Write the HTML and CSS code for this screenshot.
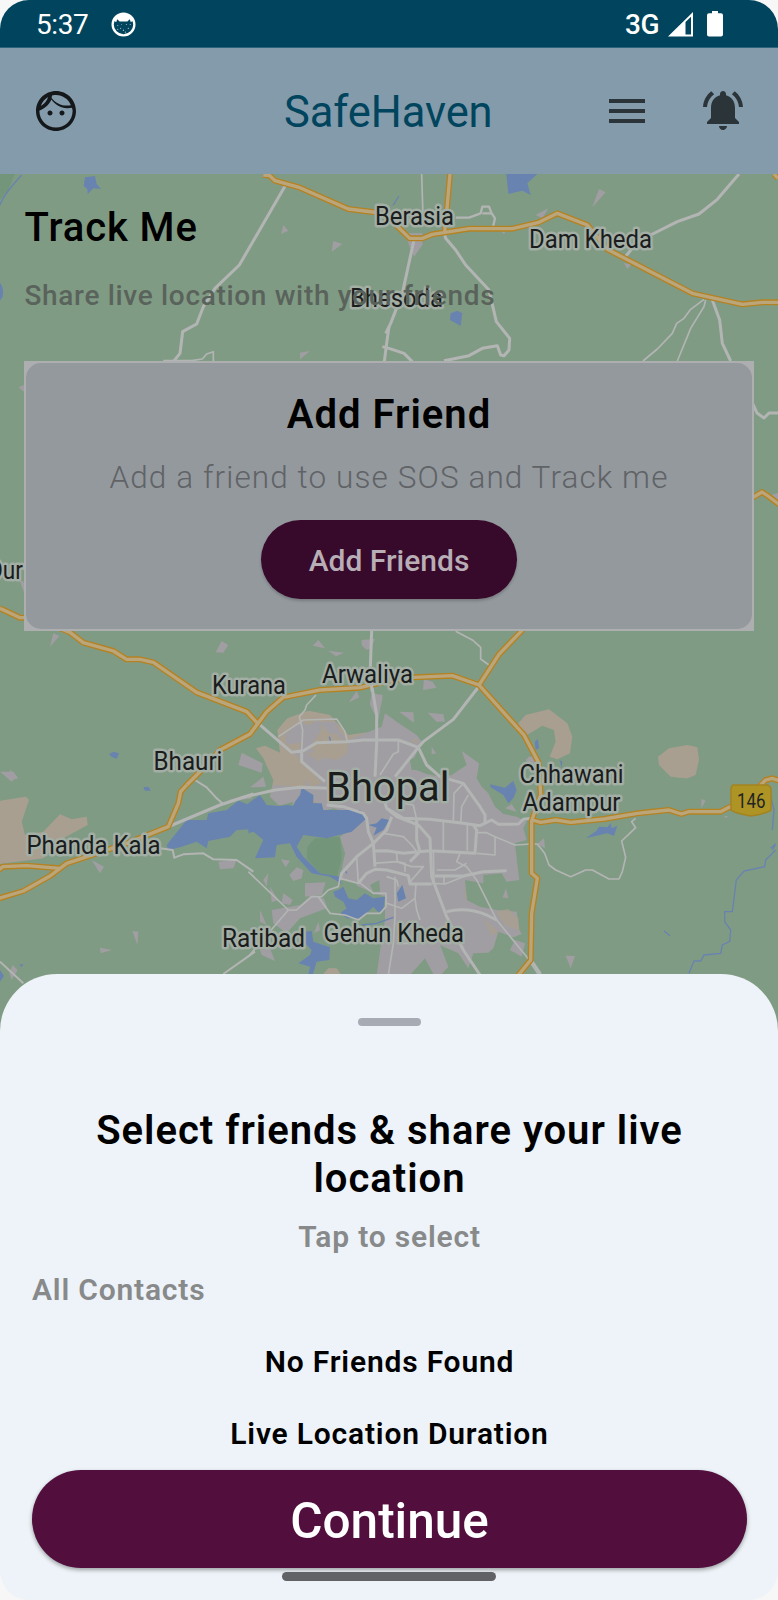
FILE: index.html
```html
<!DOCTYPE html>
<html lang="en">
<head>
<meta charset="utf-8">
<title>SafeHaven</title>
<link rel="stylesheet" href="styles.css">
</head>
<body>
<div class="screen">
  <div class="status">
    <span class="clock">5:37</span>
    <svg class="cat" viewBox="0 0 26 26"><circle cx="13" cy="13" r="11.3" fill="#00455d" stroke="#fff" stroke-width="2.4"/><path d="M2 9 5 4 13 1.200 21 4 24 9 20.500 10.500 19.500 7.500 17 10H9L6.500 7.500 5.500 10.500Z" fill="#fff"/><g fill="#a9c4cd"><circle cx="7" cy="14" r=".6"/><circle cx="10" cy="17" r=".6"/><circle cx="13" cy="19" r=".7"/><circle cx="16" cy="13" r=".6"/><circle cx="18" cy="17" r=".7"/><circle cx="20" cy="13" r=".6"/><circle cx="7" cy="18" r=".6"/><circle cx="15" cy="21" r=".6"/><circle cx="11" cy="13" r=".5"/></g></svg>
    <span class="network">3G</span>
    <svg class="signal" viewBox="0 0 25 25"><path fill="#fff" fill-rule="evenodd" d="M0 24.500 25 0V24.500ZM17.500 10V22.500H23V4.700Z"/></svg>
    <svg class="battery" viewBox="0 0 16 26"><path fill="#fff" d="M5 0h6v2.300h3q2 0 2 2V23.500q0 2-2 2H2q-2 0-2-2V4.300q0-2 2-2H5Z"/></svg>
  </div>
  <header class="appbar">
    <svg class="face" viewBox="2 2 20 20"><path fill="#14181b" d="M9 11.750c-.69 0-1.250.56-1.250 1.250s.56 1.250 1.250 1.250 1.250-.56 1.250-1.250-.56-1.250-1.250-1.250zm6 0c-.69 0-1.250.56-1.250 1.250s.56 1.250 1.250 1.250 1.250-.56 1.250-1.250-.56-1.250-1.250-1.250zM12 2C6.480 2 2 6.480 2 12s4.480 10 10 10 10-4.480 10-10S17.520 2 12 2zm0 2c3.400 0 6.270 2.130 7.430 5.120-.6.120-1.230.18-1.930.18-3.130 0-5.920-1.510-7.640-3.850-.2-.3 .1-.4 .14-1.160C10.850 4.070 11.420 4 12 4zM8.080 5.030C7.450 6.920 6.130 8.500 4.420 9.470 5.050 7.580 6.370 6 8.080 5.030zM12 20.300c-4.580 0-8.300-3.720-8.300-8.300 0-.05.010-.1 0-.14 2.600-.98 4.990-2.990 6.040-5.550 1.800 2.700 4.620 4.290 7.760 4.290.75 0 1.770-.09 2.470-.24.21.71.33.96.33 1.640 0 4.580-3.720 8.300-8.300 8.300z"/></svg>
    <h1 class="brand">SafeHaven</h1>
    <svg class="menu" viewBox="0 0 36 24"><path fill="#2b3438" d="M0 0H36V4H0ZM0 10H36V14H0ZM0 20H36V24H0Z"/></svg>
    <svg class="bell" viewBox="2 2.500 20 20"><path fill="#2b3438" d="M7.580 4.080 6.150 2.650C3.750 4.480 2.170 7.300 2.030 10.500h2c.15-2.650 1.510-4.970 3.550-6.420zm12.390 6.420h2c-.15-3.200-1.730-6.020-4.120-7.850l-1.420 1.430c2.020 1.450 3.390 3.770 3.540 6.420zM18 11c0-3.070-1.640-5.640-4.500-6.320V4c0-.83-.67-1.500-1.500-1.500s-1.500.67-1.500 1.500v.68C7.630 5.360 6 7.920 6 11v5l-2 2v1h16v-1l-2-2v-5zm-6 11c.14 0 .27-.010.4-.040.65-.14 1.180-.58 1.440-1.180.1-.24.150-.5.150-.78h-4c.010 1.100.9 2 2.010 2z"/></svg>
  </header>
  <main class="track">
    <svg class="map" viewBox="0 174 778 876">
      <rect y="174" width="778" height="876" fill="#809b84"/>
      <!-- north-west -->
      <g transform="translate(0 170) scale(.33333)">
        <path class="park" d="M0 10H45L25 60 0 90Z"/><path class="river" d="M0 105Q10 75 65 15"/>
        <path class="water" d="M255 22 285 18 290 42 303 57 280 55 263 73 262 58 251 48ZM0 338Q12 352 8 380L0 392Z"/>
        <path class="urban" d="M850 165 865 182 843 192ZM1000 213 1027 222 995 245ZM900 548 930 543 900 568ZM55 652 72 650V665Z"/>
        <path class="road" d="M860 40 718 285 645 355 610 410 590 462 548 485 540 550 520 575M1167 470 1160 520 1153 575" stroke-width="9"/>
        <path class="road" d="M640 575V545L620 552 607 567 575 572 490 572" stroke-width="5"/>
        <path class="hw-edge" d="M790 15 808 16 825 32 900 53 1045 117 1167 132"/><path class="hw" d="M790 15 808 16 825 32 900 53 1045 117 1167 132"/>
      </g>
      <!-- north-east -->
      <g transform="translate(389 170) scale(.33333)">
        <path class="water" d="M352 12H445L415 40 425 75 400 62 358 72ZM185 430 205 422 220 430 215 468 183 450Z"/><path class="river" d="M12 106 30 78"/>
        <path class="urban" d="M50 190H100V225L75 260 60 225ZM630 57 650 67 610 112ZM440 135 478 115 460 145ZM705 280 727 283 715 297ZM333 180H352L345 193Z"/>
        <path class="road" d="M98 12 102 140" stroke-width="5"/>
        <path class="road" d="M75 210 40 370 5 460-10 490M-20 530 0 535 45 550 70 575M165 185 170 205 200 240 230 285 300 360 322 455 362 505 360 540 345 557 335 555 325 527 280 535 240 557 165 572M785 195 865 155 930 132 985 88 1050 12M705 265 730 235M970 390 992 450 1000 520 1025 573" stroke-width="9"/>
        <path class="road" d="M200 143H240L275 130 280 110H300L308 130 318 145 312 170M280 130H308" stroke-width="7"/>
        <path class="road" d="M945 388 905 418 885 445 863 460 850 490 805 537 762 573M950 390 945 410 905 475 865 573" stroke-width="5"/>
        <path class="hw-edge" d="M183 12 173 125 167 185M-10 135 62 205H100L130 193 240 176H370L447 158 505 130 595 165 655 238 910 370 1060 403 1120 397H1167M1155 12 1167 25"/><path class="hw" d="M183 12 173 125 167 185M-10 135 62 205H100L130 193 240 176H370L447 158 505 130 595 165 655 238 910 370 1060 403 1120 397H1167M1155 12 1167 25"/>
      </g>
      <path class="road" d="M752 402 757 413 764 418 769 413H778" stroke-width="3"/>
      <path class="urban" d="M20 386 25 385V392ZM19 579 25 583V595ZM768 496 778 493V502Z"/>
      <path class="hw-edge side" d="M752 498 762 492 768 496 780 505"/><path class="hw side" d="M752 498 762 492 768 496 780 505"/>
      <!-- built-up areas -->
      <g transform="translate(0 560) scale(.33333)">
        <path class="urban" d="M160 220 178 228 150 260ZM665 243 685 255 670 278 647 277ZM955 240 975 265 938 257ZM985 272 1032 278 1008 289ZM1085 240 1125 237 1112 265 1100 270 1085 255ZM1070 393 1078 412 1047 427ZM1115 400 1148 405 1135 480 1110 430ZM725 578 788 610 785 638 715 615ZM30 628 55 655 35 660Z"/>
        <path class="water" d="M327 583 340 575 357 580 350 597 335 590Z"/>
      </g>
      <g transform="translate(389 560) scale(.33333)">
        <path class="urban" d="M105 358 130 365 143 383 102 390ZM420 590 450 590 440 625 410 600Z"/>
        <path class="sand" d="M388 490 410 465 480 448 535 490 550 530 543 580 505 598 482 590 500 545 495 510 460 497 405 530ZM807 590 840 565 895 555 925 562 930 600 920 645 895 655 845 650 810 615Z"/>
        <path class="water" d="M437 545 447 537 450 565 440 570ZM512 600 520 605 518 625Z"/>
        <path class="road" d="M200 214 250 240 275 262V297L300 315" stroke-width="5"/>
      </g>
      <g transform="translate(0 770) scale(.33333)">
        <path class="sand" d="M0 92 78 80 87 90 65 155 75 195 130 185 180 133 215 148 260 140 263 165 180 210 130 265 0 282ZM970 612 985 595 1010 595 1022 612Z"/>
        <path class="urban" d="M750 52 790 20 798 50ZM680 92 735 75 770 85ZM275 270 312 290 300 310ZM0 5 40 5 50 20 35 35ZM655 275 710 270 700 295 660 298ZM843 268 870 272 857 292ZM868 315 890 292 910 300 905 325 880 333ZM790 330 805 310 800 350ZM810 350 835 390 815 397ZM850 370 878 390 870 405 845 400ZM915 340 977 337 965 375 915 380ZM780 420 800 465 780 455ZM815 420 900 405 935 375 985 390 980 415 900 445 860 490 820 460ZM780 540 810 535 825 573 785 555ZM397 483 415 485 412 525ZM300 533 335 540 302 550ZM955 455 960 480 942 490ZM38 585 53 600 35 630 28 610Z"/>
      </g>
      <!-- Bhopal -->
      <g transform="translate(250 680) scale(.33333)">
        <path class="sand" d="M18 205 45 197 90 218 82 150 112 115 175 92 240 105 262 130 295 165 400 150 500 175 400 300 190 370 60 350 70 300 40 235Z"/>
        <path class="urban" d="M295 180 395 140 405 100 440 125 500 165 515 185 490 240 485 265 530 282 570 290 605 285 650 255 635 213 687 250 680 295 695 320 715 340 735 380 760 402 800 410 830 425 820 445 830 480 795 490 800 535 808 600 770 605 755 580 700 585 700 610 645 600 650 660 690 680 740 690 800 695 808 750 815 762 790 772 745 755 730 805 715 818 670 820 655 865 625 820 570 795 595 860 575 882H550L525 835 480 885H380L392 800 405 720 405 650 350 630 270 595 285 520 270 470 350 415 250 385 210 395 200 370 170 335 165 300 185 320 215 310 160 245 135 225 160 185 165 140 205 120 215 150 180 200 210 230 260 240 290 220Z"/>
        <path class="urban" d="M85 375 60 350 70 315 150 320 160 360 110 380ZM150 320 200 325 235 370 215 400 190 345ZM105 165 150 125 205 150 165 185 110 195ZM205 125 255 125 270 155 290 180 250 175ZM545 200 558 220 545 223ZM447 95 490 97 492 128ZM533 98 580 103 585 125 560 125ZM365 50 398 55 380 115 360 75ZM765 385 785 372 800 395ZM768 625 775 655 758 652ZM795 780 825 790 815 830 780 810Z"/>
        <path class="sand" d="M200 165 260 160 275 185 230 195ZM700 715 745 755 725 768ZM738 695 775 687 805 715 808 752 765 735ZM165 220 235 210 210 245ZM645 610 652 665 645 650ZM480 180 500 178 505 195Z" opacity=".8"/>
        <path class="park" d="M172 500 195 475 270 470 275 540 260 590 210 580 170 535Z"/>
        <path class="field" d="M-2 370 10 345 45 340 20 385ZM85 378 130 365 125 380ZM165 385 215 395 210 400 175 400ZM280 600 315 605 335 640 310 655 285 650ZM360 615 388 600 390 635 370 635ZM220 650 265 645 285 675 275 700 240 705ZM480 240 510 225 530 270 485 270Z"/>
        <path class="water" d="M-5 370 30 345 50 375 85 378 115 375 130 378 135 365 150 345 155 323 190 345 190 370 215 370 220 390 330 390 350 415 305 455 230 475 160 465 140 500 160 530 210 580 270 590 275 612 240 590 185 580 140 530 120 490 80 495 75 532 15 535 40 480 10 455-5 460ZM355 435 380 430 395 415 418 420 400 450 370 467 380 443ZM250 635 265 630 280 620 295 655 320 660 345 640 370 655 405 650 400 690 385 697 370 680 350 700 335 715 290 715 272 698 290 685 280 665 255 650ZM440 640 457 615 468 655 445 665ZM720 313 765 323 790 302 800 330 790 355 775 370 760 345 722 322ZM168 755 185 752 190 785 240 802 238 840 200 845 188 885H175L180 860 145 850 180 825 185 810 165 790Z"/>
        <path class="river" d="M335 735 380 730 430 712M238 170 242 185M285 570 290 580"/>
        <path class="road" d="M25 130 125 217 160 212 200 188 290 185 340 180 445 180 505 202 520 185 610 118 690 15M365 15 380 105V190L375 290M505 202 530 255 570 290 640 310 690 380 705 405 705 430M505 202 435 290M-5 348 75 330 150 322 240 325M155 210V245L225 305M230 375 280 380 340 400 350 415 355 455 370 490 375 560M400 350 410 385 460 415 540 418 640 430 690 437 725 420 745 433 805 432 820 418 845 415M410 385 440 410 505 435 540 475 545 590 590 710 640 810 690 885M425 410 410 450 370 490 320 530 275 580 270 600M370 513 410 512 460 520 505 515 540 512 675 520 680 450 670 435M325 610 350 580 375 568 410 570 475 587 480 612H545M555 588H640L700 575 770 572M590 695Q650 680 710 705L740 720M500 415V480L510 515 480 545" stroke-width="9"/>
        <path class="road" d="M85 170 145 130 160 120 260 117 285 155 292 185M198 45 170 75 165 90 148 110 158 150 155 215M445 180V215L430 222 390 285M610 425 612 340 640 310M655 345 635 380 632 430M580 420V512M652 435V512M680 458 710 458 735 470V525L680 520M735 470 795 495 845 492M400 460 460 470 485 495 500 515M320 530 325 610 270 595 265 620 235 630 215 650 185 650 140 690 115 690-5 575M115 690-5 830M205 650 240 700 285 705 325 720 350 700 390 700 408 680V640L370 640 325 605M370 550 440 545 485 560 520 560 485 600 480 615M440 520 442 545 465 550V575M435 590V710L430 790 415 885M498 610 495 655 500 690 510 720M410 670 455 685 495 655M550 515 552 605M630 520 620 545 650 560 680 600 740 720 830 830 870 890M560 570H615L650 550M460 370 490 375 498 410 500 440M350 310 380 340 400 350M410 590 440 600 445 620M545 610 585 612 640 590M582 590V612M440 790H500" stroke-width="5"/>
      </g>
      <!-- outer roads -->
      <g transform="translate(0 770) scale(.33333)">
        <path class="water" d="M500 225 560 150 620 150 625 130 680 120 715 92 755 107V178L710 180 690 200 625 213 620 235 590 215 540 232 505 240ZM430 52 445 50 453 62 435 62ZM0 600 12 618 0 635ZM58 584 70 582 65 592Z"/>
        <path class="road" d="M510 168 660 105 760 72" stroke-width="9"/>
        <path class="road" d="M670 612 765 545M585 30 620 52 650 85 670 103M480 235 518 240 523 263 550 253 610 250 640 268 710 270 760 305M0 575 70 640" stroke-width="6"/>
        <path class="hw-edge" d="M605 0 560 45 542 65 535 100 505 170 380 220 200 280 150 318 70 363-10 387M-10 305 8 290 80 287 180 295"/><path class="hw" d="M605 0 560 45 542 65 535 100 505 170 380 220 200 280 150 318 70 363-10 387M-10 305 8 290 80 287 180 295"/>
      </g>
      <g transform="translate(389 770) scale(.33333)">
        <path class="urban" d="M465 205 468 235 445 222ZM530 557 558 558 545 595ZM937 87 950 92 937 115ZM1005 138H1017L1012 145Z"/>
        <path class="sand" d="M825-5 860 22 895 25 920-5Z"/>
        <path class="water" d="M590 205 622 183 630 170 655 172 665 160 668 175 685 167 675 198 655 190Z"/>
        <path class="river" d="M825 483 843 497M1150 180 1155 120 1140 60M1145 235 1160 222 1150 240M1160 240 1130 270 1127 290 1065 303 1042 330 1030 425H1007V455L1025 480 1022 515 1000 525 995 550 945 555 935 573 915 573 900 610"/>
        <path class="road" d="M428 222 445 222 467 250 480 285 500 300 545 320 590 300H610L660 327H690L700 305 710 262 698 213 740 173 728 155 740 145" stroke-width="5"/>
        <path class="road" d="M430 575 455 612" stroke-width="8"/>
        <path class="hw-edge" d="M450-20 455 75 428 152V310L445 325 428 430 425 570 387 617M430 150 455 157 500 150 545 157 645 147 745 130 840 120 877 132 900 125H995L1020 112 1060 100 1100 60 1130 30 1150 25 1180 35"/><path class="hw" d="M450-20 455 75 428 152V310L445 325 428 430 425 570 387 617M430 150 455 157 500 150 545 157 645 147 745 130 840 120 877 132 900 125H995L1020 112 1060 100 1100 60 1130 30 1150 25 1180 35"/>
      </g>
      <g transform="translate(0 560) scale(.33333)">
        <path class="hw-edge" d="M0 145 60 173H75M180 205 210 217 250 248 340 273 380 298 420 298 460 307 590 397 740 455 773 490M560 675 605 630 660 570 750 522 800 455 850 412 960 390 1080 383 1170 362 1242 352 1357 347 1437 375 1572 525 1617 610M1569 208 1497 283 1437 375"/><path class="hw" d="M0 145 60 173H75M180 205 210 217 250 248 340 273 380 298 420 298 460 307 590 397 740 455 773 490M560 675 605 630 660 570 750 522 800 455 850 412 960 390 1080 383 1170 362 1242 352 1357 347 1437 375 1572 525 1617 610M1569 208 1497 283 1437 375"/>
        <path class="road" d="M1115 212 1110 350 1117 395" stroke-width="9"/>
      </g>
      <path d="M734 785H766Q771 785 771 790V810Q768 813 751 816Q734 813 731 810V790Q731 785 734 785Z" fill="#ad9425" stroke="#a4821f" stroke-width="1.500"/>
      <text x="737" y="807.500" font-size="20" textLength="28.500" lengthAdjust="spacingAndGlyphs" fill="#202324">146</text>
      <g class="label">
        <text x="375" y="224.500" textLength="79" lengthAdjust="spacingAndGlyphs">Berasia</text>
        <text x="529" y="248" textLength="123" lengthAdjust="spacingAndGlyphs">Dam Kheda</text>
        <text x="350" y="307" textLength="93" lengthAdjust="spacingAndGlyphs">Bhesoda</text>
        <text x="-12" y="578.500" textLength="35" lengthAdjust="spacingAndGlyphs">Dur</text>
        <text x="212" y="694" textLength="74" lengthAdjust="spacingAndGlyphs">Kurana</text>
        <text x="322" y="682.500" textLength="91" lengthAdjust="spacingAndGlyphs">Arwaliya</text>
        <text x="153.500" y="770" textLength="69" lengthAdjust="spacingAndGlyphs">Bhauri</text>
        <text x="519.500" y="783" textLength="104" lengthAdjust="spacingAndGlyphs">Chhawani</text>
        <text x="522.500" y="811" textLength="98" lengthAdjust="spacingAndGlyphs">Adampur</text>
        <text x="26.500" y="854" textLength="134" lengthAdjust="spacingAndGlyphs">Phanda Kala</text>
        <text x="222" y="947" textLength="83" lengthAdjust="spacingAndGlyphs">Ratibad</text>
        <text x="323.500" y="942" textLength="140.500" lengthAdjust="spacingAndGlyphs">Gehun Kheda</text>
        <text class="city" x="326" y="801" textLength="123.500" lengthAdjust="spacingAndGlyphs">Bhopal</text>
      </g>
    </svg>
    <div class="content">
      <h2 class="title">Track Me</h2>
      <p class="subtitle">Share live location with your friends</p>
      <div class="card-frame">
        <div class="card">
          <h3 class="card-title">Add Friend</h3>
          <p class="card-text">Add a friend to use SOS and Track me</p>
          <button class="add">Add Friends</button>
        </div>
      </div>
    </div>
  </main>
  <section class="sheet">
    <div class="handle"></div>
    <h2 class="sheet-title">Select friends &amp; share your live location</h2>
    <p class="hint tap">Tap to select</p>
    <p class="hint all">All Contacts</p>
    <p class="note none">No Friends Found</p>
    <p class="note duration">Live Location Duration</p>
    <button class="continue">Continue</button>
    <div class="home"></div>
  </section>
</div>
</body>
</html>
```
FILE: styles.css
```css
* { box-sizing: border-box; }
body { margin: 0; background: #f7f7f7; font-family: Roboto, sans-serif; }
h1, h2, h3, p { margin: 0; white-space: nowrap; }
button { border: 0; padding: 0; font-family: inherit; display: block; }
svg { display: block; flex: none; }

.screen { width: 778px; height: 1600px; overflow: hidden; border-radius: 29px; display: flex; flex-direction: column; }

.status { height: 48px; flex: none; background: #00455d; border-bottom: 1px solid #2c657b; color: #fff; display: flex; align-items: center; padding: 1px 55px 0 36px; }
.clock { font-size: 28px; line-height: 34px; width: 75px; padding-top: 2px; letter-spacing: -.4px; }
.cat { width: 25px; height: 25px; }
.network { margin-left: auto; font-size: 28px; font-weight: 500; width: 35px; letter-spacing: -.3px; }
.signal { width: 25px; height: 25px; margin-left: 8px; }
.battery { width: 16px; height: 26px; margin-left: 14px; }

.appbar { height: 126px; flex: none; background: #849bab; display: flex; align-items: center; padding: 0 35px; }
.face { width: 40px; height: 40px; margin-left: .5px; }
.brand { margin-left: 208.5px; width: 210px; color: #00455d; font-size: 43.5px; font-weight: 400; line-height: 52px; padding-top: 4px; letter-spacing: -.1px; }
.menu { width: 36px; height: 24px; margin-left: 115px; }
.bell { width: 40px; height: 40px; margin-left: auto; }

.track { position: relative; height: 800px; flex: none; }
.map { position: absolute; left: 0; top: 0; width: 778px; height: 876px; }
.content { position: relative; padding: 30px 24px 0; }
.title { font-size: 40px; line-height: 48px; font-weight: 500; letter-spacing: .9px; color: #000; padding-left: .5px; }
.subtitle { margin-top: 27px; font-size: 28px; line-height: 34px; font-weight: 500; letter-spacing: .67px; color: #5a635b; padding-left: .5px; }
.card-frame { margin-top: 48px; height: 270px; background: #adaeb0; padding: 2px; }
.card { height: 266px; border-radius: 15px; background: #94999e; display: flex; flex-direction: column; align-items: center; padding-top: 28px; }
.card-title { font-size: 40px; line-height: 48px; font-weight: 600; letter-spacing: 1px; }
.card-text { margin-top: 21px; font-size: 31.5px; line-height: 36px; font-weight: 300; letter-spacing: 1.1px; color: #606366; }
.add { margin-top: 24px; width: 256px; height: 79px; border-radius: 40px; background: #37092a; color: #b8aeb6; font-size: 30px; font-weight: 500; padding-top: 2px; box-shadow: 0 2px 3px rgba(0,0,0,.2); }

.park { fill: #73967a; }
.field { fill: #809b84; }
.urban { fill: #a09ea2; }
.sand { fill: #a99f90; }
.water { fill: #6883b0; }
.river { fill: none; stroke: #6883b0; stroke-width: 4; }
.road { fill: none; stroke: #b2b5b3; stroke-linejoin: round; }
.hw-edge { fill: none; stroke: #b58221; stroke-width: 18; stroke-linejoin: round; }
.hw { fill: none; stroke: #bba67b; stroke-width: 10; stroke-linejoin: round; }
.hw-edge.side { stroke-width: 6; }
.hw.side { stroke-width: 3.3; }
.label { font-size: 25px; fill: #1b1d1d; stroke: #a3aea5; stroke-width: 5px; stroke-linejoin: round; paint-order: stroke; }
.label .city { font-size: 41px; }

.sheet { position: relative; height: 626px; flex: none; background: #edf3f8; border-radius: 57px 57px 0 0; display: flex; flex-direction: column; align-items: center; padding: 44px 31px 0 32px; }
.handle { width: 63px; height: 8px; border-radius: 4px; background: #a7acb4; }
.sheet-title { margin-top: 81px; width: 640px; white-space: normal; text-align: center; font-size: 40px; line-height: 48px; font-weight: 600; letter-spacing: 1px; }
.hint { font-size: 30px; line-height: 36px; font-weight: 600; letter-spacing: .8px; color: #88898a; }
.tap { margin-top: 16px; }
.all { margin-top: 17px; align-self: flex-start; }
.note { font-size: 30px; line-height: 36px; font-weight: 600; letter-spacing: .8px; }
.none { margin-top: 36px; }
.duration { margin-top: 36px; }
.continue { margin-top: 18px; width: 715px; height: 98px; flex: none; border-radius: 49px; background: #520f3e; color: #fff; font-size: 49.5px; font-weight: 500; padding-top: 4px; box-shadow: 0 2px 4px rgba(0,0,0,.35); }
.home { margin: 4px 2px 0 0; width: 214px; height: 9px; border-radius: 4.5px; background: #606265; }
```
